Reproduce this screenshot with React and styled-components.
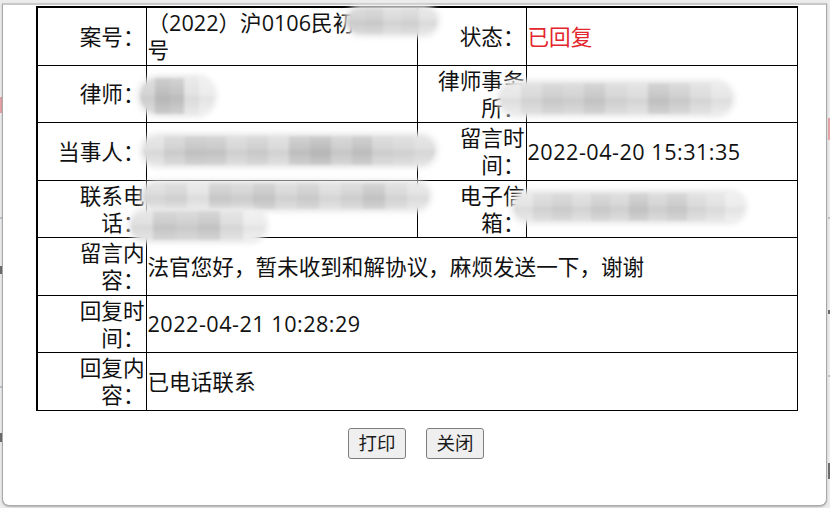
import React from 'react';
import styled, { createGlobalStyle } from 'styled-components';

const FONT = '"Open Sans", "Noto Sans CJK SC", sans-serif';

const GlobalStyle = createGlobalStyle`
  html, body { margin: 0; padding: 0; width: 830px; height: 508px; overflow: hidden; background: #e8e8e8; }
  #root { width: 830px; height: 508px; }
  *, *::before, *::after { box-sizing: border-box; }
`;

const Page = styled.div`
  position: relative;
  width: 830px;
  height: 508px;
  background: #ececec;
  display: flex;
  justify-content: space-between;
  font-family: ${FONT};
`;

const EdgeStrip = styled.div`
  display: flex;
  flex-direction: column;
  width: 2px;
`;

const Tick = styled.span`
  display: block;
  width: 2px;
  margin-top: ${p => p.$gap}px;
  height: ${p => p.$h}px;
  background: ${p => p.$c};
`;

const Dialog = styled.div`
  position: absolute;
  left: 2px;
  top: 3px;
  width: 825px;
  height: 503px;
  background: #fff;
  border: 1px solid #a9a9a9;
  border-top: 2px solid #c9c9c9;
  border-radius: 0 0 7px 7px;
  box-shadow: 0 1px 2px rgba(0, 0, 0, 0.25);
  padding: 1px 0 0 33px;
  display: flex;
  flex-direction: column;
  align-items: flex-start;
`;

const TableWrap = styled.div`
  position: relative;
  width: 760px;
`;

const Table = styled.table`
  width: 760px;
  table-layout: fixed;
  border-collapse: collapse;
  border-top: 2px solid #000;
  border-left: 2px solid #000;
  border-right: 1px solid #555;
  border-bottom: 1px solid #000;
  font-family: ${FONT};
  font-size: 21.6px;
  line-height: 27.25px;
  color: #111;
  text-spacing-trim: space-all;
`;

const Cell = styled.td`
  border: 1px solid #000;
  padding: 1px;
  vertical-align: middle;
  text-align: ${p => (p.$label ? 'right' : 'left')};
  color: ${p => (p.$red ? '#e3262d' : '#111')};
  word-break: normal;
`;

const DateText = styled.span`
  letter-spacing: 0.5px;
`;

const Mask = styled.span`
  position: absolute;
  left: ${p => p.$x}px;
  top: ${p => p.$y}px;
  width: ${p => p.$w}px;
  height: ${p => p.$h}px;
  border-radius: ${p => Math.round(p.$h / 2)}px;
  background:
    linear-gradient(180deg, rgba(255,255,255,0.25), rgba(255,255,255,0) 45%, rgba(0,0,0,0.04) 55%, rgba(255,255,255,0.2)),
    linear-gradient(90deg, ${p => p.$stops});
  filter: blur(1.6px);
  box-shadow: 0 0 5px 3px rgba(232, 232, 232, 0.95);
  pointer-events: none;
`;

const ButtonRow = styled.div`
  width: 760px;
  margin-top: 17px;
  display: flex;
  justify-content: center;
  gap: 20px;
`;

const Button = styled.button`
  height: 31px;
  width: 58px;
  padding: 0;
  font-family: ${FONT};
  font-size: 18.5px;
  line-height: 1;
  color: #1a1a1a;
  background: #efefef;
  border: 1px solid #7d7d7d;
  border-radius: 3px;
  text-spacing-trim: space-all;
`;

function buildStops(w, shades) {
  const n = shades.length;
  const step = w / n;
  return shades
    .map((c, i) => `${c} ${Math.round(i * step)}px ${Math.round((i + 1) * step)}px`)
    .join(', ');
}

const masks = [
  { x: 311, y: 2, w: 90, h: 26, shades: ['#d2d2d2', '#cfcfcf', '#dadada', '#d6d6d6', '#e2e2e2'] },
  { x: 104, y: 72, w: 74, h: 36, shades: ['#d4d4d4', '#bdbdbd', '#c3c3c3', '#e3e3e3', '#ececec'] },
  { x: 464, y: 77, w: 232, h: 31, shades: ['#e6e6e6', '#d9d9d9', '#cfcfcf', '#d3d3d3', '#c9c9c9', '#d6d6d6', '#dcdcdc', '#c6c6c6', '#d0d0d0', '#dcdcdc', '#e6e6e6'] },
  { x: 107, y: 130, w: 292, h: 29, shades: ['#e0e0e0', '#d2d2d2', '#c7c7c7', '#c9c9c9', '#d6d6d6', '#cfcfcf', '#d9d9d9', '#c4c4c4', '#bcbcbc', '#cdcdcd', '#c2c2c2', '#d4d4d4', '#d8d8d8', '#dedede'] },
  { x: 107, y: 177, w: 286, h: 26, shades: ['#dcdcdc', '#d6d6d6', '#e4e4e4', '#cdcdcd', '#d3d3d3', '#c9c9c9', '#d7d7d7', '#cfcfcf', '#dcdcdc', '#d4d4d4', '#c8c8c8', '#d9d9d9', '#e3e3e3'] },
  { x: 95, y: 205, w: 134, h: 29, shades: ['#e0e0e0', '#cbcbcb', '#d0d0d0', '#c9c9c9', '#dddddd', '#ececec'] },
  { x: 478, y: 187, w: 230, h: 28, shades: ['#e4e4e4', '#d8d8d8', '#d1d1d1', '#dadada', '#cfcfcf', '#d6d6d6', '#c8c8c8', '#d4d4d4', '#cccccc', '#dadada', '#e2e2e2', '#ececec'] },
];

export default function App() {
  return (
    <>
      <GlobalStyle />
      <Page>
        <EdgeStrip>
          <Tick $gap={97} $h={16} $c="#e7a3a8" />
          <Tick $gap={104} $h={2} $c="#b9c3cc" />
          <Tick $gap={47} $h={8} $c="#6e6e6e" />
          <Tick $gap={112} $h={2} $c="#b9c3cc" />
          <Tick $gap={45} $h={9} $c="#6e6e6e" />
        </EdgeStrip>
        <EdgeStrip>
          <Tick $gap={118} $h={22} $c="#e7a3a8" />
          <Tick $gap={77} $h={2} $c="#b9c3cc" />
          <Tick $gap={91} $h={4} $c="#6e6e6e" />
          <Tick $gap={61} $h={2} $c="#b9c3cc" />
          <Tick $gap={86} $h={16} $c="#6e6e6e" />
        </EdgeStrip>
        <Dialog>
          <TableWrap>
            <Table>
              <colgroup>
                <col style={{ width: 109 }} />
                <col style={{ width: 271 }} />
                <col style={{ width: 109 }} />
                <col style={{ width: 271 }} />
              </colgroup>
              <tbody>
                <tr>
                  <Cell $label>案号：</Cell>
                  <Cell>（2022）沪0106民初<br />号</Cell>
                  <Cell $label>状态：</Cell>
                  <Cell $red>已回复</Cell>
                </tr>
                <tr>
                  <Cell $label>律师：</Cell>
                  <Cell />
                  <Cell $label>律师事务所：</Cell>
                  <Cell />
                </tr>
                <tr>
                  <Cell $label>当事人：</Cell>
                  <Cell />
                  <Cell $label>留言时间：</Cell>
                  <Cell><DateText>2022-04-20 15:31:35</DateText></Cell>
                </tr>
                <tr>
                  <Cell $label>联系电话：</Cell>
                  <Cell />
                  <Cell $label>电子信箱：</Cell>
                  <Cell />
                </tr>
                <tr>
                  <Cell $label>留言内容：</Cell>
                  <Cell colSpan={3}>法官您好，暂未收到和解协议，麻烦发送一下，谢谢</Cell>
                </tr>
                <tr>
                  <Cell $label>回复时间：</Cell>
                  <Cell colSpan={3}><DateText>2022-04-21 10:28:29</DateText></Cell>
                </tr>
                <tr>
                  <Cell $label>回复内容：</Cell>
                  <Cell colSpan={3}>已电话联系</Cell>
                </tr>
              </tbody>
            </Table>
            {masks.map((m, i) => (
              <Mask key={i} $x={m.x} $y={m.y} $w={m.w} $h={m.h} $stops={buildStops(m.w, m.shades)} />
            ))}
          </TableWrap>
          <ButtonRow>
            <Button type="button">打印</Button>
            <Button type="button">关闭</Button>
          </ButtonRow>
        </Dialog>
      </Page>
    </>
  );
}
